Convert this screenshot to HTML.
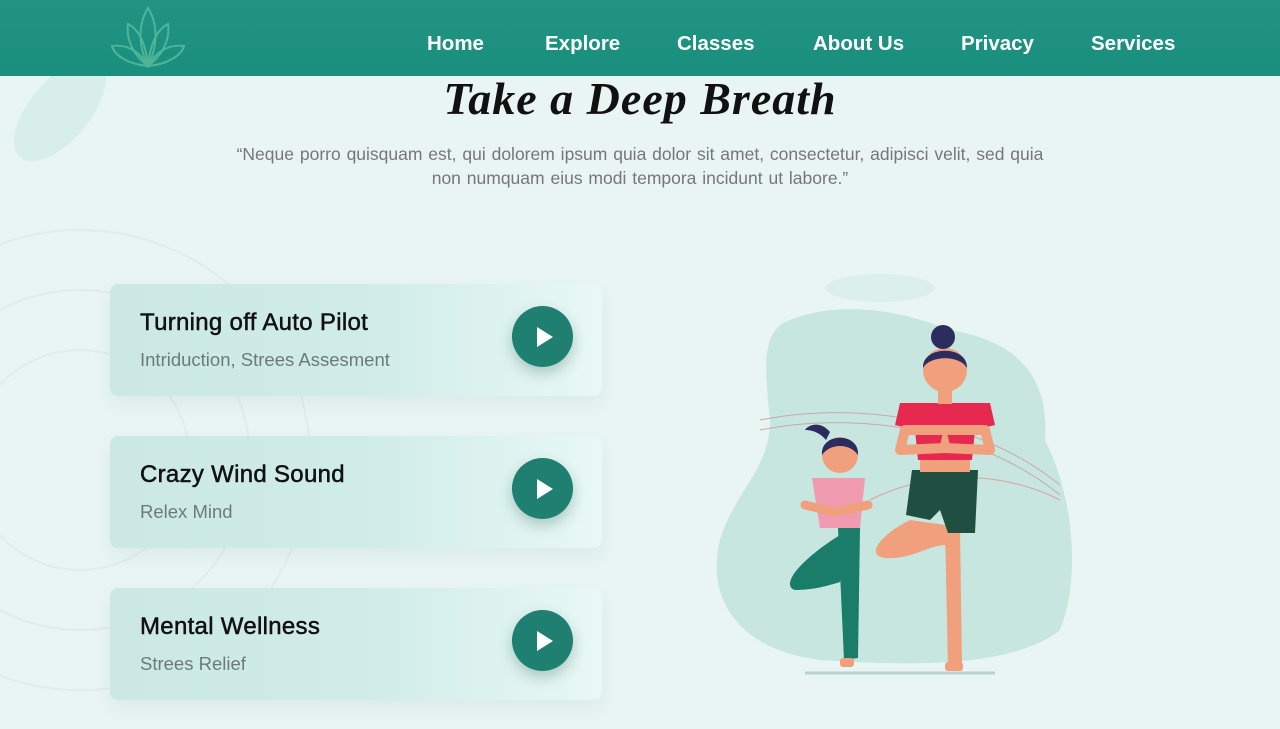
<!DOCTYPE html>
<html><head><meta charset="utf-8"><style>
*{margin:0;padding:0;box-sizing:border-box}
body{width:1280px;height:729px;overflow:hidden;background:#e8f5f2;font-family:"Liberation Sans",sans-serif;position:relative}
header{position:absolute;left:0;top:0;width:1280px;height:76px;background:linear-gradient(#229383,#1a8f7d);}
nav a{position:absolute;top:32px;color:#fff;font-weight:bold;font-size:20.5px;text-decoration:none}
h1{position:absolute;top:72px;left:0;width:1280px;text-align:center;font-family:"Liberation Serif",serif;font-style:italic;font-weight:bold;font-size:46px;color:#111;letter-spacing:1px}
.q{position:absolute;top:142px;left:225px;width:830px;text-align:center;color:#777;font-size:17.5px;line-height:24px;word-spacing:1px}
.card{position:absolute;left:110px;width:492px;height:112px;border-radius:8px;background:linear-gradient(90deg,#cbe8e4 0%,#cfece8 50%,#e8f8f5 100%);box-shadow:0 8px 20px rgba(0,80,70,.06)}
.card h3{position:absolute;left:30px;top:25px;font-size:24px;color:#111;font-weight:normal;-webkit-text-stroke:.5px #111;letter-spacing:.3px}
.card p{position:absolute;left:30px;top:65px;font-size:18.5px;color:#6e7a78}
.btn{position:absolute;left:402px;top:22px;width:61px;height:61px;border-radius:50%;background:#1f7f71;box-shadow:0 6px 14px rgba(0,60,50,.25)}
.btn:after{content:"";position:absolute;left:25px;top:21px;border-left:16px solid #fff;border-top:10px solid transparent;border-bottom:10px solid transparent}
</style></head><body>
<svg style="position:absolute;left:0;top:60px" width="130" height="110"><ellipse cx="60" cy="50" rx="30" ry="62" transform="rotate(40 60 50)" fill="#d3ece7" opacity=".8"/></svg>
<svg style="position:absolute;left:0;top:190px" width="320" height="539"><circle cx="80" cy="270" r="230" fill="none" stroke="#e2ecea" stroke-width="2"/><circle cx="80" cy="270" r="170" fill="none" stroke="#e2ecea" stroke-width="2"/><circle cx="80" cy="270" r="110" fill="none" stroke="#e2ecea" stroke-width="2"/></svg>
<header>
<svg style="position:absolute;left:110px;top:6px" width="76" height="62" viewBox="0 0 76 62" fill="none" stroke="#4fb598" stroke-width="2"><path d="M38 2 C28 18 28 40 38 60 C48 40 48 18 38 2Z"/><path d="M38 60 C22 48 16 32 18 18 C30 24 36 40 38 60Z"/><path d="M38 60 C54 48 60 32 58 18 C46 24 40 40 38 60Z"/><path d="M38 60 C16 58 4 48 2 40 C18 38 30 46 38 60Z"/><path d="M38 60 C60 58 72 48 74 40 C58 38 46 46 38 60Z"/></svg>
<nav><a style="left:427px">Home</a><a style="left:545px">Explore</a><a style="left:677px">Classes</a><a style="left:813px">About Us</a><a style="left:961px">Privacy</a><a style="left:1091px">Services</a></nav>
</header>
<h1>Take a Deep Breath</h1>
<div class="q">“Neque porro quisquam est, qui dolorem ipsum quia dolor sit amet, consectetur, adipisci velit, sed quia<br>non numquam eius modi tempora incidunt ut labore.”</div>
<div class="card" style="top:284px"><h3>Turning off Auto Pilot</h3><p>Intriduction, Strees Assesment</p><div class="btn"></div></div>
<div class="card" style="top:436px"><h3>Crazy Wind Sound</h3><p>Relex Mind</p><div class="btn"></div></div>
<div class="card" style="top:588px"><h3>Mental Wellness</h3><p>Strees Relief</p><div class="btn"></div></div>
<svg style="position:absolute;left:0;top:0" width="1280" height="729">
<ellipse cx="880" cy="288" rx="55" ry="14" fill="#dcefeb"/>
<path d="M790 320 C840 300 900 310 950 330 C1010 340 1050 370 1045 440 C1075 500 1080 580 1060 630 C1010 670 900 665 820 660 C740 650 705 600 720 540 C735 490 770 470 770 420 C765 370 760 330 790 320Z" fill="#c6e6df"/>
<path d="M760 420 C860 400 980 420 1060 485" fill="none" stroke="#c9a9a9" stroke-width="1"/>
<path d="M760 430 C860 410 980 430 1060 495" fill="none" stroke="#c9a9a9" stroke-width="1"/>
<path d="M870 500 C930 470 1000 470 1060 500" fill="none" stroke="#e0a0a0" stroke-width="1"/>
<line x1="805" y1="673" x2="995" y2="673" stroke="#b8d3ce" stroke-width="3"/>
<path d="M945 525 L960 530 L962 665 L948 668Z" fill="#f0a07c"/>
<path d="M910 520 C880 535 865 555 885 558 C910 560 930 545 945 545 L948 570 L945 525Z" fill="#f0a07c"/>
<rect x="945" y="662" width="18" height="9" rx="3" fill="#f0a07c"/>
<path d="M912 470 L978 470 L975 533 L948 533 L940 510 L930 520 L906 515Z" fill="#1f4f40"/>
<rect x="920" y="450" width="50" height="22" fill="#f0a07c"/>
<path d="M900 403 L990 403 L995 425 L975 430 L972 460 L918 460 L915 430 L895 425Z" fill="#e8294f"/>
<path d="M905 430 L900 450 L945 448 L990 450 L985 430Z" fill="none" stroke="#f0a07c" stroke-width="10" stroke-linejoin="round"/>
<path d="M945 425 L940 445 L950 445Z" fill="#f0a07c"/>
<rect x="938" y="388" width="14" height="16" fill="#f0a07c"/>
<circle cx="945" cy="370" r="22" fill="#f0a07c"/>
<path d="M923 368 C922 345 968 345 967 368 C960 355 930 355 923 368Z" fill="#2b2d5e"/>
<circle cx="943" cy="337" r="12" fill="#2b2d5e"/>
<path d="M838 528 L860 528 L858 658 L844 660 Z" fill="#1a7d6a"/>
<path d="M840 535 C800 560 780 585 795 590 C815 590 830 585 840 582 L845 560Z" fill="#1a7d6a"/>
<rect x="840" y="658" width="14" height="9" rx="3" fill="#f0a07c"/>
<path d="M812 478 L865 478 L860 528 L820 528Z" fill="#f19bb0"/>
<path d="M805 505 L835 512 L868 505" fill="none" stroke="#f0a07c" stroke-width="9" stroke-linecap="round"/>
<circle cx="840" cy="455" r="18" fill="#f0a07c"/>
<path d="M822 455 C820 432 860 432 858 455 C850 443 830 443 822 455Z" fill="#2b2d5e"/>
<path d="M830 432 C820 420 808 425 805 430 C815 430 822 435 826 440Z" fill="#2b2d5e"/>
</svg>
</body></html>
